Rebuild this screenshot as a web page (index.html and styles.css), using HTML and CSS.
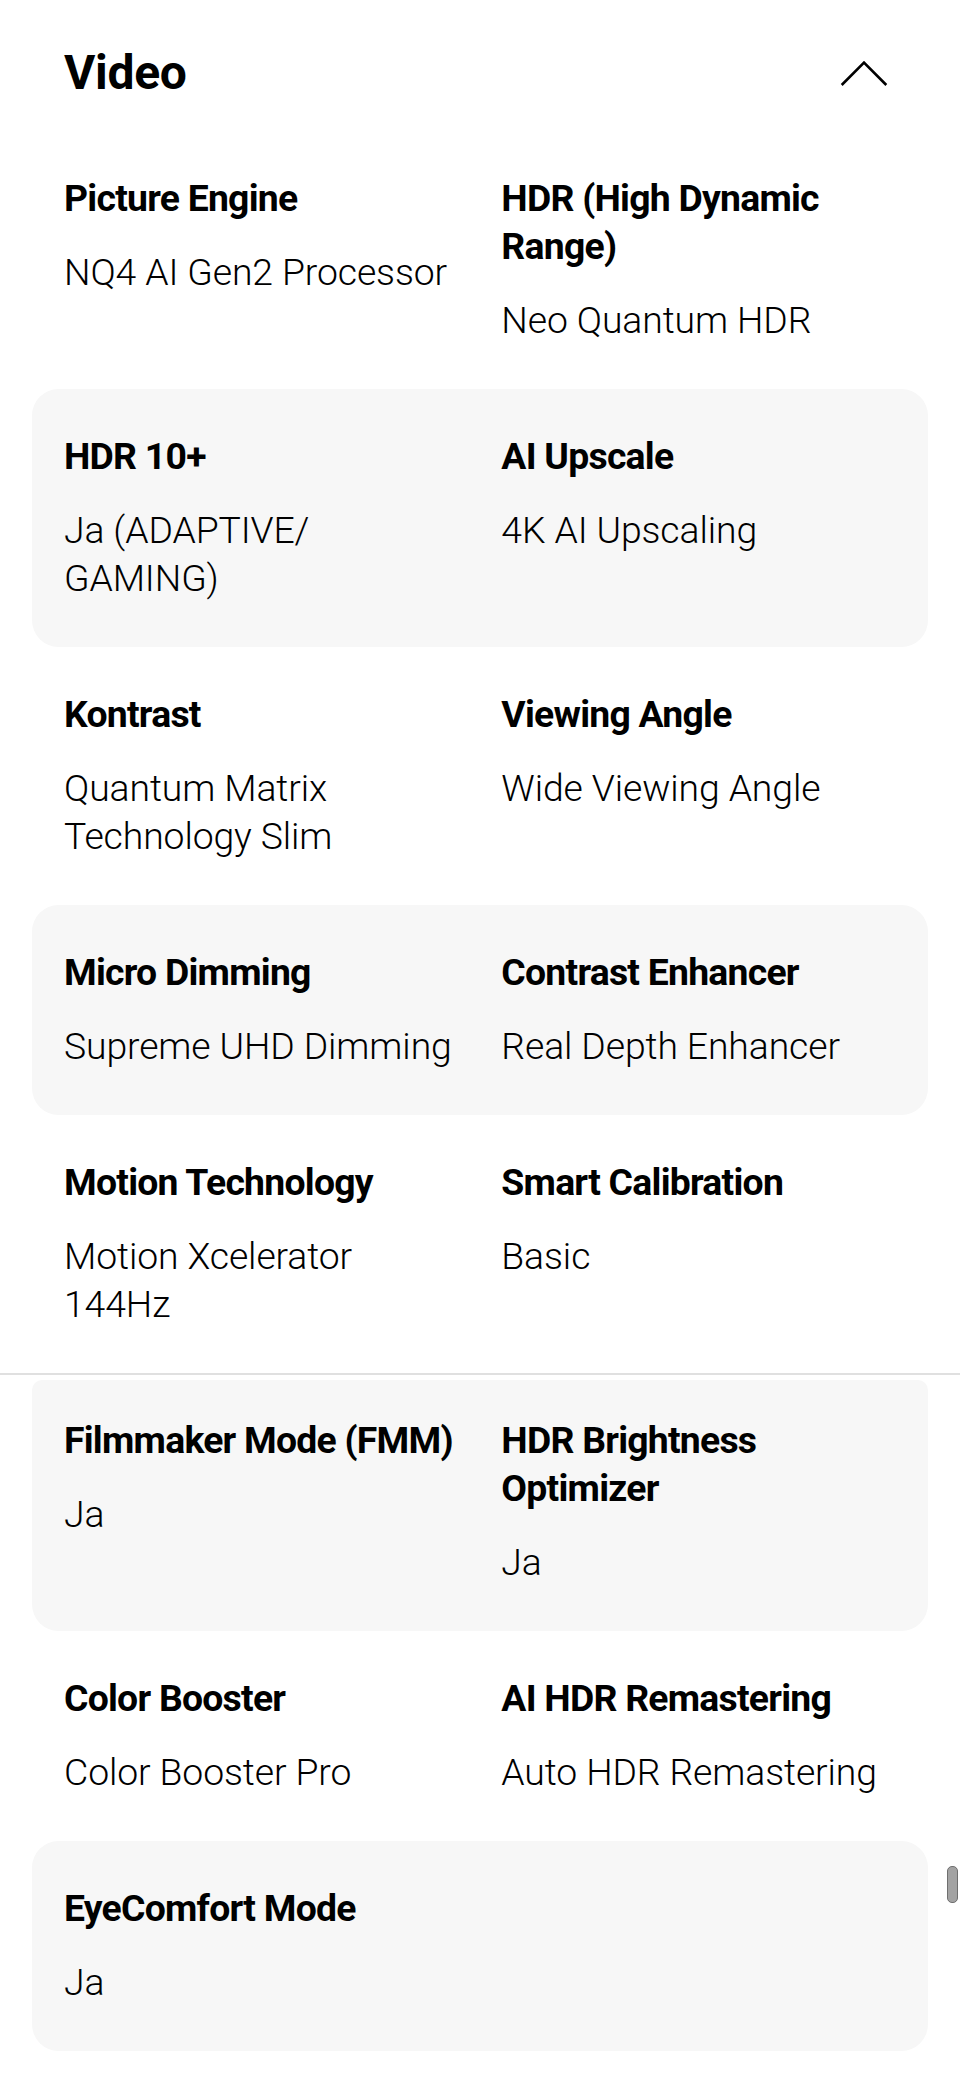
FILE: index.html
```html
<!DOCTYPE html>
<html lang="nl">
<head>
<meta charset="utf-8">
<title>Video</title>
<link rel="stylesheet" href="styles.css">
</head>
<body>
<section class="spec">
  <div class="spec-head">
    <h2 class="spec-title">Video</h2>
    <svg class="chevron" width="50" height="30" viewBox="0 0 50 30" aria-hidden="true">
      <polyline points="2.7,27 25,4.7 47.3,27" fill="none" stroke="#000" stroke-width="2.6" stroke-linecap="butt" stroke-linejoin="miter"/>
    </svg>
  </div>

  <div class="row">
    <div class="item"><div class="label">Picture Engine</div><div class="value">NQ4 AI Gen2 Processor</div></div>
    <div class="item"><div class="label">HDR (High Dynamic Range)</div><div class="value">Neo Quantum HDR</div></div>
  </div>
  <div class="row alt">
    <div class="item"><div class="label">HDR 10+</div><div class="value">Ja (ADAPTIVE/<br>GAMING)</div></div>
    <div class="item"><div class="label">AI Upscale</div><div class="value">4K AI Upscaling</div></div>
  </div>
  <div class="row">
    <div class="item"><div class="label">Kontrast</div><div class="value">Quantum Matrix Technology Slim</div></div>
    <div class="item"><div class="label">Viewing Angle</div><div class="value">Wide Viewing Angle</div></div>
  </div>
  <div class="row alt">
    <div class="item"><div class="label">Micro Dimming</div><div class="value">Supreme UHD Dimming</div></div>
    <div class="item"><div class="label">Contrast Enhancer</div><div class="value">Real Depth Enhancer</div></div>
  </div>
  <div class="row">
    <div class="item"><div class="label">Motion Technology</div><div class="value">Motion Xcelerator 144Hz</div></div>
    <div class="item"><div class="label">Smart Calibration</div><div class="value">Basic</div></div>
  </div>
  <div class="divider"></div>
  <div class="row alt cut">
    <div class="item"><div class="label">Filmmaker Mode (FMM)</div><div class="value">Ja</div></div>
    <div class="item"><div class="label">HDR Brightness Optimizer</div><div class="value">Ja</div></div>
  </div>
  <div class="row">
    <div class="item"><div class="label">Color Booster</div><div class="value">Color Booster Pro</div></div>
    <div class="item"><div class="label">AI HDR Remastering</div><div class="value">Auto HDR Remastering</div></div>
  </div>
  <div class="row alt">
    <div class="item"><div class="label">EyeComfort Mode</div><div class="value">Ja</div></div>
  </div>
</section>
<div class="scroll-thumb"></div>
</body>
</html>
```

FILE: styles.css
```css
html, body {
  margin: 0;
  padding: 0;
  background: #ffffff;
}

body {
  font-family: Roboto, "Noto Sans", "Liberation Sans", sans-serif;
  color: #000000;
  width: 960px;
  min-height: 2086px;
  position: relative;
}

.spec {
  display: flex;
  flex-direction: column;
}

.spec-head {
  display: flex;
  align-items: center;
  justify-content: space-between;
  padding: 49px 71px 34px 64px;
}

.spec-title {
  margin: 0;
  font-size: 48px;
  line-height: 48px;
  font-weight: 700;
  letter-spacing: -0.3px;
}

.chevron {
  display: block;
}

.row {
  display: grid;
  grid-template-columns: 1fr 1fr;
  column-gap: 42.67px;
  padding: 43px 32px 45px;
  margin: 0 32px;
  border-radius: 26.67px;
}

.row.alt {
  background: #f7f7f7;
}

.row.cut {
  padding-top: 36px;
  border-radius: 10px 10px 26.67px 26.67px;
}

.item {
  display: flex;
  flex-direction: column;
  gap: 26px;
  min-width: 0;
}

.label {
  font-size: 37.33px;
  line-height: 48px;
  font-weight: 700;
  letter-spacing: -0.75px;
}

.value {
  font-size: 37.33px;
  line-height: 48px;
  font-weight: 300;
  color: #000000;
  letter-spacing: -0.1px;
}

.divider {
  height: 2px;
  background: #e0e0e0;
  margin-bottom: 5px;
}

.scroll-thumb {
  position: absolute;
  left: 947px;
  top: 1866px;
  width: 9px;
  height: 35px;
  border-radius: 5px;
  background: #a3a3a3;
  border: 1px solid #6f6f6f;
}
```
